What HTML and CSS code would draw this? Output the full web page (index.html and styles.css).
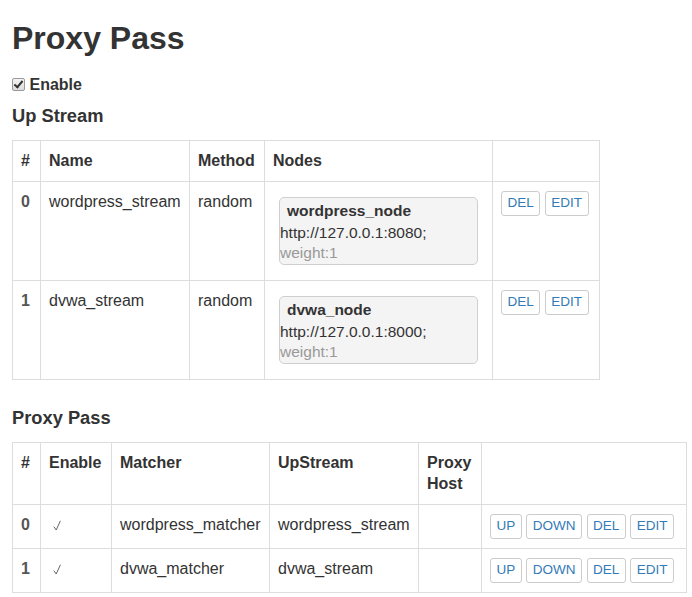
FILE: index.html
```html
<!DOCTYPE html>
<html lang="en">
<head>
<meta charset="utf-8">
<title>Proxy Pass</title>
<link rel="stylesheet" href="styles.css">
</head>
<body>
<div class="page">
  <h1 class="title">Proxy Pass</h1>
  <label class="enable"><input type="checkbox" class="check" checked><span>Enable</span></label>

  <h4 class="section">Up Stream</h4>
  <table class="grid grid-up">
    <colgroup>
      <col style="width:28px"><col style="width:149px"><col style="width:75px"><col style="width:228px"><col style="width:107px">
    </colgroup>
    <thead>
      <tr><th>#</th><th>Name</th><th>Method</th><th>Nodes</th><th></th></tr>
    </thead>
    <tbody>
      <tr>
        <th>0</th><td>wordpress_stream</td><td>random</td>
        <td><div class="node"><span class="node-name">wordpress_node</span><span class="node-addr">http://127.0.0.1:8080;</span><span class="node-weight">weight:1</span></div></td>
        <td><div class="btns"><button class="btn">DEL</button><button class="btn">EDIT</button></div></td>
      </tr>
      <tr>
        <th>1</th><td>dvwa_stream</td><td>random</td>
        <td><div class="node"><span class="node-name">dvwa_node</span><span class="node-addr">http://127.0.0.1:8000;</span><span class="node-weight">weight:1</span></div></td>
        <td><div class="btns"><button class="btn">DEL</button><button class="btn">EDIT</button></div></td>
      </tr>
    </tbody>
  </table>

  <h4 class="section">Proxy Pass</h4>
  <table class="grid grid-pass">
    <colgroup>
      <col style="width:28px"><col style="width:71px"><col style="width:158px"><col style="width:149px"><col style="width:63px"><col style="width:205px">
    </colgroup>
    <thead>
      <tr><th>#</th><th>Enable</th><th>Matcher</th><th>UpStream</th><th>Proxy Host</th><th></th></tr>
    </thead>
    <tbody>
      <tr>
        <th>0</th><td><svg class="tick" width="8" height="11" viewBox="0 0 8 11" aria-label="✓"><path d="M0.8 6.6 L3.2 10 L7.4 0.8" fill="none" stroke="#666" stroke-width="1"/></svg></td><td>wordpress_matcher</td><td>wordpress_stream</td><td></td>
        <td><div class="btns"><button class="btn">UP</button><button class="btn">DOWN</button><button class="btn">DEL</button><button class="btn">EDIT</button></div></td>
      </tr>
      <tr>
        <th>1</th><td><svg class="tick" width="8" height="11" viewBox="0 0 8 11" aria-label="✓"><path d="M0.8 6.6 L3.2 10 L7.4 0.8" fill="none" stroke="#666" stroke-width="1"/></svg></td><td>dvwa_matcher</td><td>dvwa_stream</td><td></td>
        <td><div class="btns"><button class="btn">UP</button><button class="btn">DOWN</button><button class="btn">DEL</button><button class="btn">EDIT</button></div></td>
      </tr>
    </tbody>
  </table>
</div>
</body>
</html>
```
FILE: styles.css
```css
html, body {
  margin: 0;
  padding: 0;
  background: #fff;
}
body {
  font-family: "Liberation Sans", Arial, sans-serif;
  font-size: 16px;
  line-height: 1.42857;
  color: #333;
}
.page {
  padding: 0 12px;
}
.title {
  font-size: 32px;
  font-weight: bold;
  line-height: 1.1;
  margin: 21px 0 17.5px;
}
.enable {
  display: flex;
  align-items: flex-start;
  font-weight: bold;
}
.check {
  appearance: none;
  -webkit-appearance: none;
  width: 13px;
  height: 13px;
  margin: 4px 4.5px 0 0;
  border: 1px solid #9a9a9a;
  border-radius: 2px;
  background: linear-gradient(#f4f4f4, #dcdcdc);
  position: relative;
  box-sizing: border-box;
}
.check:checked::after {
  content: "";
  position: absolute;
  left: 3px;
  top: 0px;
  width: 3px;
  height: 7px;
  border: solid #333;
  border-width: 0 2px 2px 0;
  transform: rotate(40deg);
}
.section {
  font-size: 18.3px;
  font-weight: bold;
  line-height: 1.1;
  margin: 9px 0 14px;
}
.grid {
  border-collapse: collapse;
  table-layout: fixed;
  margin-bottom: 28px;
}
.grid-up { width: 587px; }
.grid-pass { width: 674px; }
.grid th,
.grid td {
  border: 1px solid #ddd;
  padding: 9px 8px;
  text-align: left;
  vertical-align: top;
}
.grid thead th {
  font-weight: bold;
  line-height: 21px;
  padding-top: 9.5px;
  padding-bottom: 9.5px;
}
.grid tbody th {
  font-weight: bold;
  color: #555;
}
.tick {
  display: inline-block;
  vertical-align: baseline;
  margin: 0 0 -1px 4px;
}
.node {
  margin: 6px;
  border: 1px solid #cfcfcf;
  border-radius: 5px;
  background: #f4f4f4;
  font-size: 15.5px;
  line-height: 20.5px;
}
.node-name {
  display: block;
  font-weight: bold;
  line-height: 25px;
  padding-left: 7px;
}
.node-addr {
  display: block;
}
.node-weight {
  display: block;
  color: #999;
}
.btns {
  display: flex;
  gap: 4.5px;
}
.btn {
  font-family: "Liberation Sans", Arial, sans-serif;
  font-size: 13.5px;
  line-height: 20.6px;
  padding: 1.2px 5.5px;
  border: 1px solid #ccc;
  border-radius: 3px;
  background: #fff;
  color: #337ab7;
  cursor: pointer;
  margin: 0;
}
```
